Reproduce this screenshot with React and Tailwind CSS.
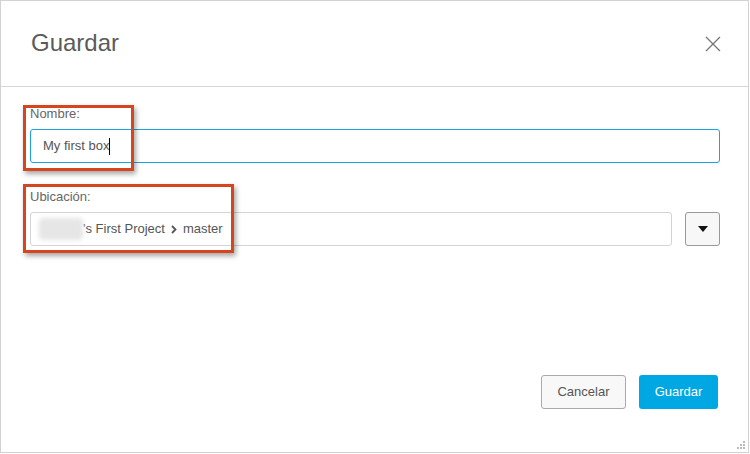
function CloseIcon() {
  return (
    <svg width="16" height="16" viewBox="0 0 16 16" fill="none" stroke="#777" strokeWidth="1.3">
      <path d="M1 1 L15 15 M15 1 L1 15" />
    </svg>
  );
}

function Grip() {
  return (
    <svg width="9" height="9" viewBox="0 0 9 9" className="absolute right-[2px] bottom-[2px]">
      <rect x="6" y="0" width="2" height="2" fill="#bbb" />
      <rect x="3" y="3" width="2" height="2" fill="#bbb" />
      <rect x="6" y="3" width="2" height="2" fill="#bbb" />
      <rect x="0" y="6" width="2" height="2" fill="#bbb" />
      <rect x="3" y="6" width="2" height="2" fill="#bbb" />
      <rect x="6" y="6" width="2" height="2" fill="#bbb" />
    </svg>
  );
}

export default function App() {
  return (
    <div
      className="relative w-[749px] h-[453px] border border-[#d2d2d2] bg-white flex flex-col text-[#555]"
      style={{ fontFamily: '"Liberation Sans", Arial, sans-serif' }}
    >
      <div className="h-[86px] shrink-0 border-b border-[#d6d6d6] flex items-center justify-between pl-[30px] pr-[27px]">
        <h1 className="text-[24px] text-[#5b5b5b] leading-none pb-[2px]">Guardar</h1>
        <button className="w-[16px] h-[16px] flex items-center justify-center">
          <CloseIcon />
        </button>
      </div>

      <div className="flex-1 flex flex-col pl-[29px] pr-[28px] pt-[19px]">
        <label className="text-[13px] leading-[16px] text-[#666]">Nombre:</label>
        <div className="mt-[7px] h-[34px] border border-[#1ba3dc] rounded-[3px] flex items-center pl-[12px] text-[13px] text-[#555]">
          <span>My first box</span>
          <span className="w-px h-[17px] bg-black"></span>
        </div>

        <label className="mt-[26px] text-[13px] leading-[16px] text-[#666]">Ubicación:</label>
        <div className="mt-[7px] flex gap-[13px]">
          <div className="flex-1 h-[34px] border border-[#d4d4d4] rounded-[3px] flex items-center pl-[8px] text-[13px] text-[#555]">
            <span className="w-[44px] h-[22px] bg-[#e6e6e6] blur-[2px] rounded-sm"></span>
            <span>'s First Project</span>
            <svg width="6" height="9" viewBox="0 0 6 9" className="mx-[6px]" fill="none" stroke="#555" strokeWidth="1.8">
              <path d="M1 1 L4.5 4.5 L1 8" />
            </svg>
            <span>master</span>
          </div>
          <button className="w-[35px] h-[34px] border border-[#999] rounded-[3px] bg-[#f7f7f7] flex items-center justify-center">
            <svg width="10" height="6" viewBox="0 0 10 6">
              <path d="M0 0 L10 0 L5 6 Z" fill="#111" />
            </svg>
          </button>
        </div>

        <div className="flex-1"></div>

        <div className="flex justify-end gap-[13px] pb-[43px] pr-[2px]">
          <button className="w-[85px] h-[34px] border border-[#aaa] rounded-[3px] bg-[#f8f8f8] text-[13px] text-[#555]">
            Cancelar
          </button>
          <button className="w-[79px] h-[34px] rounded-[3px] bg-[#00a8e3] text-[13px] text-white">
            Guardar
          </button>
        </div>
      </div>

      <div className="absolute left-[22px] top-[104px] w-[111px] h-[66px] border-[3px] border-[#d5461e] shadow-[2px_3px_5px_rgba(0,0,0,0.35)]"></div>
      <div className="absolute left-[22px] top-[183px] w-[211px] h-[69px] border-[3px] border-[#d5461e] shadow-[2px_3px_5px_rgba(0,0,0,0.35)]"></div>

      <Grip />
    </div>
  );
}
